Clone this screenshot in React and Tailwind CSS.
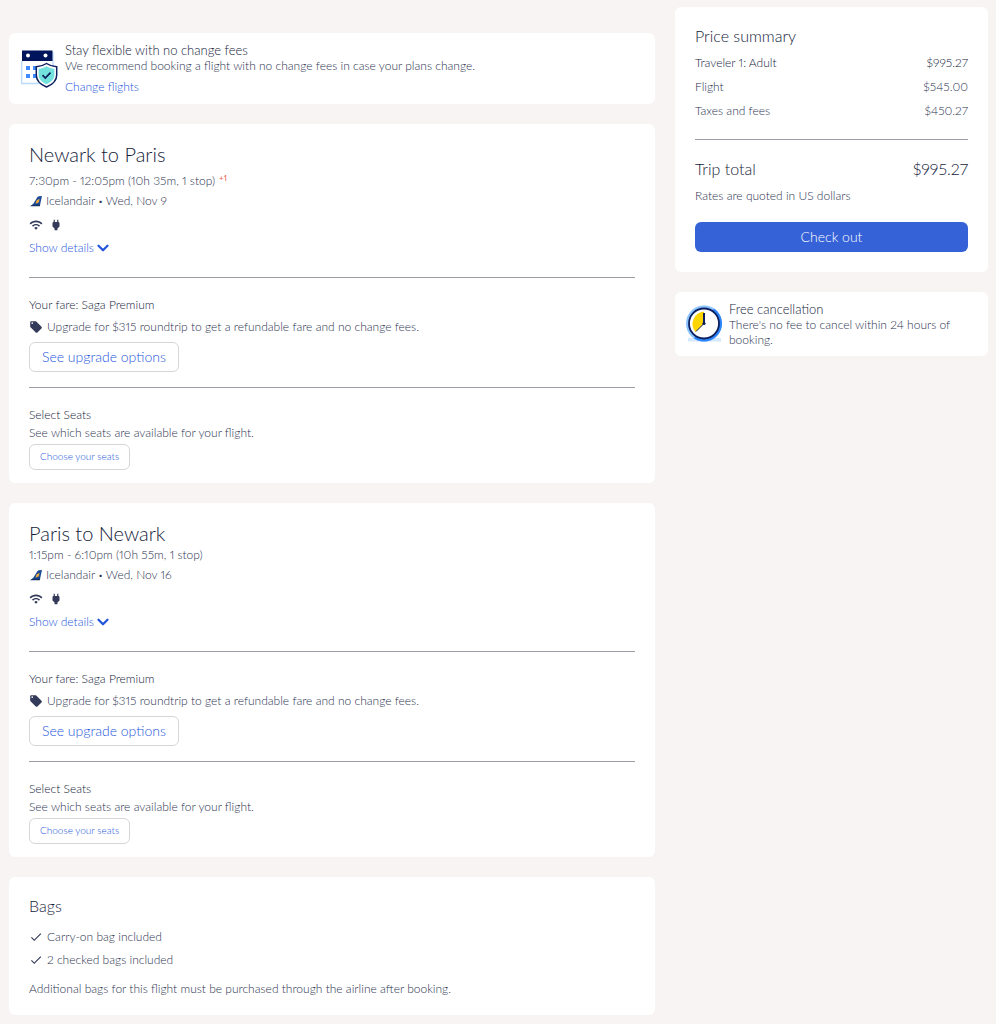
import React from 'react';
import { ChevronDown } from 'lucide-react';
import { MdCheck, MdLocalOffer, MdPower, MdWifi } from 'react-icons/md';

const flights = [
  {
    id: 'outbound',
    title: 'Newark to Paris',
    times: '7:30pm - 12:05pm (10h 35m, 1 stop)',
    dayOffset: '+1',
    date: 'Wed, Nov 9',
  },
  {
    id: 'return',
    title: 'Paris to Newark',
    times: '1:15pm - 6:10pm (10h 55m, 1 stop)',
    date: 'Wed, Nov 16',
  },
];

const bags = ['Carry-on bag included', '2 checked bags included'];

const CalendarShieldIcon = () => (
  <svg viewBox="0 0 40 40" className="w-10 h-10 shrink-0" aria-hidden="true">
    <path d="M.7 12v22.500H32V3" fill="#fff" stroke="#b9dbff" strokeWidth="1.300" />
    <rect x="1" y="1.500" width="30.500" height="10.500" fill="#00145c" />
    <circle cx="7" cy="6.500" r="2" fill="#fff" />
    <circle cx="24.500" cy="6.500" r="2" fill="#fff" />
    <path d="M5 17h4v4H5zM5 25h4v4H5zM12 17h4v4h-4zM12 25h4v4h-4z" fill="#3d8bff" />
    <path
      d="M25.500 14.500c3 2 6 3 10.200 3.200v8.300c0 5.500-4 9.500-10.200 12-6.200-2.500-10.200-6.500-10.200-12v-8.300c4.200-.2 7.200-1.200 10.200-3.200z"
      fill="#fff"
      stroke="#0c1f5c"
      strokeWidth="1.500"
    />
    <path
      d="M25.500 17.200c2.500 1.500 4.900 2.300 7.900 2.500v6.500c0 3.900-3.200 6.900-7.900 9-4.700-2.100-7.900-5.100-7.900-9v-6.500c3-.2 5.400-1 7.900-2.500z"
      fill="#74e2dc"
    />
    <path d="M21.500 26.200l2.800 2.800 5.200-5.400" fill="none" stroke="#0c1f5c" strokeWidth="1.700" />
  </svg>
);

const ClockIcon = () => (
  <svg viewBox="0 0 40 40" className="w-10 h-10 shrink-0" aria-hidden="true">
    <path d="M3 34h33v3.500H3z" fill="#d6eaff" />
    <circle cx="19" cy="19.500" r="18" fill="#8cc4ff" />
    <path d="M29 4.500a18 18 0 0 1-20 30l10-15z" fill="#2f86fb" />
    <circle cx="19" cy="19.500" r="15" fill="#fff" stroke="#0c1f5c" strokeWidth="1.800" />
    <path d="M19 19.500V7.500a12.500 12.500 0 0 0-8.500 20.500z" fill="#ffd500" />
    <path d="M19 19.500V9" stroke="#0c1f5c" strokeWidth="2" />
    <path d="M19 19.500l-8 8" stroke="#0c1f5c" strokeWidth="1" />
    <circle cx="19" cy="19.500" r="1.600" fill="#0c1f5c" />
  </svg>
);

const AirlineLogo = () => (
  <svg viewBox="0 0 14 12" className="w-3.5 h-3 shrink-0" aria-hidden="true">
    <path d="M1.500 11C4 9.500 5.500 7 7 4.500 8 2.800 8.700 1.500 10 1.300L13 1l-2.200 10z" fill="#1d4a94" />
    <path d="M7.500 5.500l3-1.700-.6 3.400-3.400 1.600z" fill="#f0ad3c" />
    <path d="M1 11.200h9.800l.4-1.700L4 9.800z" fill="#143468" />
  </svg>
);

const Card = ({ className = '', children }) => (
  <section className={`bg-white rounded-md ${className}`}>{children}</section>
);

const FlightCard = ({ flight }) => (
  <Card className="px-5 pt-5 pb-[13px]">
    <h2 className="text-xl leading-5 text-[#141b3a]">{flight.title}</h2>
    <p className="flex items-end gap-1 mt-0.5 leading-5">
      {flight.times}
      {flight.dayOffset && (
        <sup className="top-0 h-[25px] text-[8px] leading-6 font-normal text-[#e8604c]">{flight.dayOffset}</sup>
      )}
    </p>
    <p className="flex items-center gap-[3px] leading-5">
      <AirlineLogo />
      Icelandair <span className="text-[8px]">•</span> {flight.date}
    </p>
    <div className="flex gap-1.5 mt-[7px] text-[#343b5a]">
      <MdWifi className="w-3.5 h-3.5" aria-label="Wifi" />
      <MdPower className="w-3.5 h-3.5" aria-label="Power outlet" />
    </div>
    <button type="button" className="flex items-center mt-1.5 leading-5 text-[#2456dc]">
      Show details
      <ChevronDown className="w-[18px] h-[18px]" strokeWidth={3} />
    </button>

    {/* Fare */}
    <div className="mt-[19px] pt-[15px] border-t border-[#9a9ca6]">
      <h3 className="leading-6 text-[#141b3a]">Your fare: Saga Premium</h3>
      <p className="flex items-center gap-1 leading-5">
        <MdLocalOffer className="w-3.5 h-3.5 text-[#343b5a]" />
        Upgrade for $315 roundtrip to get a refundable fare and no change fees.
      </p>
      <button
        type="button"
        className="mt-[5px] h-[30px] px-3 rounded-md border border-[#d5d6da] text-sm text-[#2456dc]"
      >
        See upgrade options
      </button>
    </div>

    {/* Seats */}
    <div className="mt-[15px] pt-[15px] border-t border-[#9a9ca6]">
      <h3 className="leading-6 text-[#141b3a]">Select Seats</h3>
      <p className="leading-3">See which seats are available for your flight.</p>
      <button
        type="button"
        className="mt-[5px] h-[26px] px-2.5 rounded-md border border-[#d5d6da] text-[10px] text-[#2456dc]"
      >
        Choose your seats
      </button>
    </div>
  </Card>
);

const PriceRow = ({ label, amount, className = '' }) => (
  <div className={`flex justify-between ${className}`}>
    <dt>{label}</dt>
    <dd>{amount}</dd>
  </div>
);

const App = () => {
  return (
    <div className="min-h-screen bg-[#f7f4f3] pl-[9px] pr-2 pt-[7px] pb-2 font-['Lato',sans-serif] font-light proportional-nums text-xs text-[#2c3350]">
      <div className="grid grid-cols-[minmax(0,1fr)_313px] gap-5 items-start">
        <main className="flex flex-col gap-5 pt-[26px]">
          <Card className="flex items-center gap-1 px-3 py-[9px]">
            <CalendarShieldIcon />
            <div>
              <h3 className="text-[13px] leading-4 text-[#141b3a]">Stay flexible with no change fees</h3>
              <p className="leading-[15px]">
                We recommend booking a flight with no change fees in case your plans change.
              </p>
              <a href="#change" className="block mt-1.5 leading-4 text-[#2456dc]">Change flights</a>
            </div>
          </Card>

          {flights.map((flight) => (
            <FlightCard key={flight.id} flight={flight} />
          ))}

          {/* Bags */}
          <Card className="px-5 pt-5 pb-4">
            <h2 className="text-base leading-[18px] text-[#141b3a]">Bags</h2>
            <ul className="mt-2.5">
              {bags.map((bag) => (
                <li key={bag} className="flex items-center gap-1 leading-[23px]">
                  <MdCheck className="w-3.5 h-3.5 text-[#343b5a]" />
                  {bag}
                </li>
              ))}
            </ul>
            <p className="mt-2 leading-5">
              Additional bags for this flight must be purchased through the airline after booking.
            </p>
          </Card>
        </main>

        <aside className="flex flex-col gap-5">
          <Card className="p-5">
            <h2 className="text-base leading-[18px] text-[#141b3a]">Price summary</h2>
            <dl>
              <PriceRow label="Traveler 1: Adult" amount="$995.27" className="mt-1.5 leading-6 text-[#141b3a]" />
              <PriceRow label="Flight" amount="$545.00" className="leading-6" />
              <PriceRow label="Taxes and fees" amount="$450.27" className="leading-6" />
              <PriceRow
                label="Trip total"
                amount="$995.27"
                className="mt-4 pt-5 border-t border-[#9a9ca6] text-base leading-[18px] text-[#141b3a]"
              />
            </dl>
            <p className="mt-2 leading-5">Rates are quoted in US dollars</p>
            <button type="button" className="mt-4 w-full h-[30px] rounded-md bg-[#3662d8] text-sm text-white">
              Check out
            </button>
          </Card>

          <Card className="flex items-center gap-1 px-2.5 py-[9px]">
            <ClockIcon />
            <div>
              <h3 className="text-[13px] leading-4 text-[#141b3a]">Free cancellation</h3>
              <p className="leading-[15px]">There's no fee to cancel within 24 hours of booking.</p>
            </div>
          </Card>
        </aside>
      </div>
    </div>
  );
};

export default App;
